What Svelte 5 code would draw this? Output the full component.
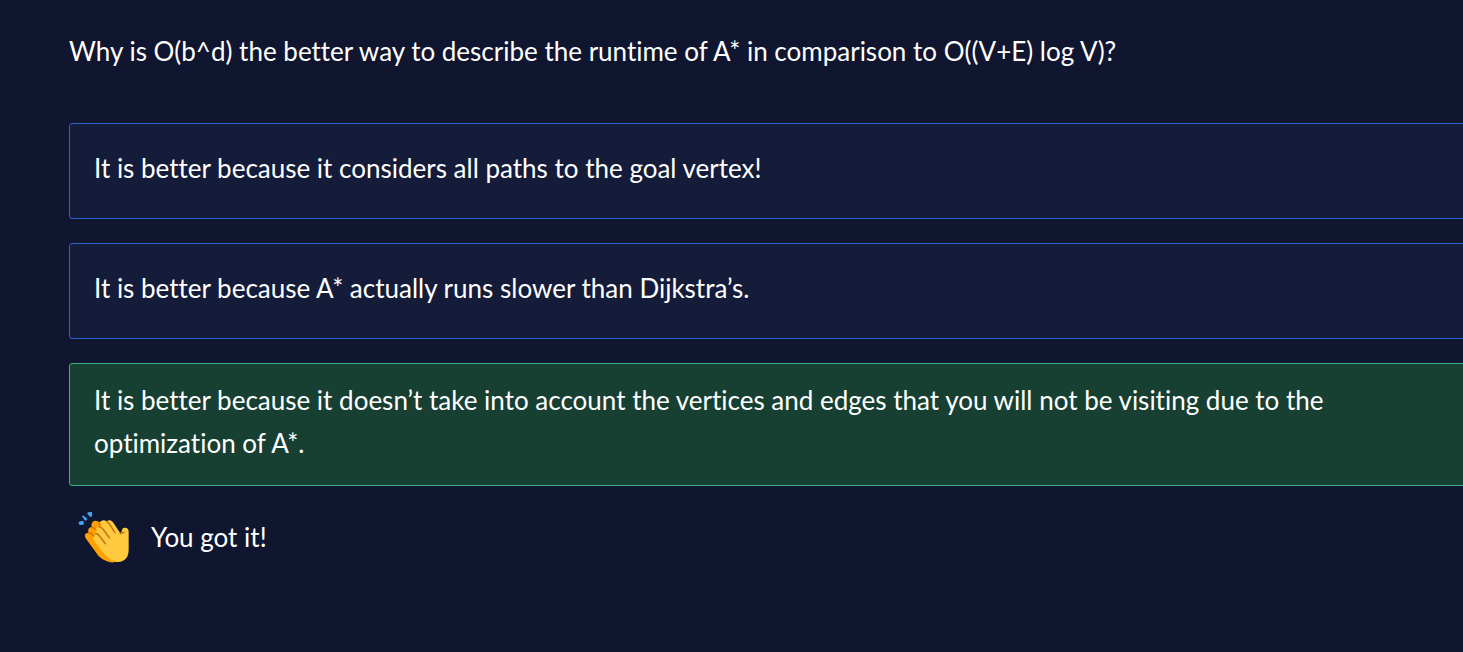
<script>
  const question =
    'Why is O(b^d) the better way to describe the runtime of A* in comparison to O((V+E) log V)?';
  const answers = [
    'It is better because it considers all paths to the goal vertex!',
    'It is better because A* actually runs slower than Dijkstra’s.',
    'It is better because it doesn’t take into account the vertices and edges that you will not be visiting due to the optimization of A*.'
  ];
  const correct = 2;
  let selected = $state(2);
</script>

<main>
  <h1>{question}</h1>
  <div class="answers">
    {#each answers as answer, i}
      <button
        type="button"
        class="answer"
        class:correct={selected === i && i === correct}
        aria-pressed={selected === i}
        onclick={() => (selected = i)}>{answer}</button>
    {/each}
  </div>
  {#if selected === correct}
    <div class="feedback" role="status">
      <svg viewBox="12 9 156 156" aria-hidden="true">
        <g fill="#42a5f5">
          <path d="M14 43 Q18 38 27 38 Q31 43 29 50 L18 51 Q13 49 14 43Z" />
          <path d="M24 25 Q25 22 29 23 L40 32 Q39 38 33 38Z" />
          <path d="M39 15 Q43 11 53 12 L55 18 L52 28 Q45 26 39 15Z" />
        </g>
        <path
          fill="#ffa000"
          d="M35 91 Q29 80 37 76 Q41 73 44 75 Q40 63 47 59 Q51 56 54 58 Q50 48 56 42 Q62 35 71 40 L82 45 L150 120 L130 160 Q114 167 97 159 Q84 155 73 143Z"
        />
        <path
          fill="#ffca3e"
          d="M60 98 Q52 84 61 78 L65 77 Q60 63 69 58 Q73 56 76 57 Q73 43 83 38 Q91 34 99 41 Q100 36 108 37 Q114 38 118 44 L139 76 Q143 74 144 65 Q145 59 152 59 Q163 58 164 70 L164 125 Q164 147 151 156 Q140 164 125 161 Q113 159 101 148 Q91 140 84 130Z"
        />
        <g fill="none" stroke-linecap="round" stroke-width="5">
          <path stroke="#d87c00" d="M44 75 Q54 75 60 84 M54 58 Q60 58 66 66 M74 45 Q77 48 79 53" />
          <path stroke="#c47a20" d="M65 77 Q71 76 76 83 L94 107 M76 57 Q84 58 89 66 L106 89 M99 41 Q104 44 109 52 L123 74 M139 77 Q143 73 150 73" />
        </g>
      </svg>
      <p>You got it!</p>
    </div>
  {/if}
</main>

<style>
  :global(body) {
    margin: 0;
    background: #10162f;
  }
  main {
    overflow: hidden;
    padding: 30px 0 32px 69px;
    color: #fff;
    font-family: Lato, sans-serif;
    font-size: 26px;
    font-variant-ligatures: none;
    line-height: 43px;
  }
  h1 {
    margin: 0 0 50px;
    font-size: inherit;
    font-weight: 400;
  }
  .answers {
    display: grid;
    gap: 24px;
    margin-right: -8px;
  }
  .answer {
    display: flex;
    align-items: center;
    box-sizing: border-box;
    width: 100%;
    min-height: 96px;
    padding: 15px 32px 20px 24px;
    border: 1px solid #2b62d0;
    border-radius: 3px;
    background: #141c3a;
    color: inherit;
    font: inherit;
    font-variant-ligatures: none;
    text-align: left;
    cursor: pointer;
  }
  .correct {
    border-color: #3fb083;
    background: #174033;
  }
  .feedback {
    display: flex;
    align-items: center;
    gap: 21px;
    padding: 25px 9px;
  }
  .feedback svg {
    width: 52px;
    height: 52px;
  }
  .feedback p {
    margin: 0;
  }
</style>
